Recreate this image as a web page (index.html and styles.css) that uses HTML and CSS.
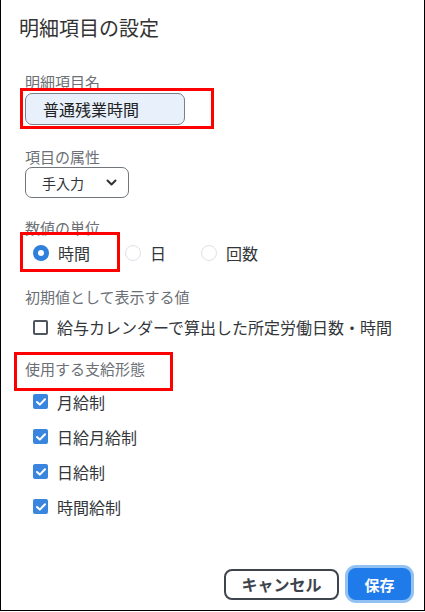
FILE: index.html
```html
<!DOCTYPE html>
<html lang="ja">
<head>
    <meta charset="UTF-8">
    <meta name="viewport" content="width=device-width, initial-scale=1.0">
    <title>明細項目の設定</title>
    <link rel="stylesheet" href="styles.css">
</head>
<body>
    <div class="dialog">
        <h1 class="title">明細項目の設定</h1>

        <div class="field field-name">
            <div class="label">明細項目名</div>
            <div class="text-input">普通残業時間</div>
        </div>

        <div class="field field-type">
            <div class="label">項目の属性</div>
            <div class="select">
                <span>手入力</span>
                <svg class="chevron" width="11" height="7" viewBox="0 0 11 7">
                    <path d="M1.5 1.5 L5.5 5.5 L9.5 1.5" fill="none" stroke="#2f3338" stroke-width="2" stroke-linecap="round" stroke-linejoin="round"/>
                </svg>
            </div>
        </div>

        <div class="field">
            <div class="label">数値の単位</div>
            <div class="radios">
                <label class="radio"><span class="dot checked"></span>時間</label>
                <label class="radio"><span class="dot"></span>日</label>
                <label class="radio"><span class="dot"></span>回数</label>
            </div>
        </div>

        <div class="field">
            <div class="label">初期値として表示する値</div>
            <div class="check-single">
                <label class="check"><span class="box"></span>給与カレンダーで算出した所定労働日数・時間</label>
            </div>
        </div>

        <div class="field field-pay">
            <div class="label">使用する支給形態</div>
            <div class="check-list">
                <label class="check"><span class="box on"><svg width="10" height="8" viewBox="0 0 10 8"><path d="M1 4 L3.8 6.6 L9 1.2" fill="none" stroke="#fff" stroke-width="2" stroke-linecap="round" stroke-linejoin="round"/></svg></span>月給制</label>
                <label class="check"><span class="box on"><svg width="10" height="8" viewBox="0 0 10 8"><path d="M1 4 L3.8 6.6 L9 1.2" fill="none" stroke="#fff" stroke-width="2" stroke-linecap="round" stroke-linejoin="round"/></svg></span>日給月給制</label>
                <label class="check"><span class="box on"><svg width="10" height="8" viewBox="0 0 10 8"><path d="M1 4 L3.8 6.6 L9 1.2" fill="none" stroke="#fff" stroke-width="2" stroke-linecap="round" stroke-linejoin="round"/></svg></span>日給制</label>
                <label class="check"><span class="box on"><svg width="10" height="8" viewBox="0 0 10 8"><path d="M1 4 L3.8 6.6 L9 1.2" fill="none" stroke="#fff" stroke-width="2" stroke-linecap="round" stroke-linejoin="round"/></svg></span>時間給制</label>
            </div>
        </div>

        <div class="footer">
            <button class="btn cancel">キャンセル</button>
            <button class="btn save">保存</button>
        </div>

        <!-- 赤枠の注釈 -->
        <div class="mark mark-1"></div>
        <div class="mark mark-2"></div>
        <div class="mark mark-3"></div>
    </div>
</body>
</html>
```

FILE: styles.css
```css
body{
    margin: 0;
    background-color: #fff;
    font-family: "Noto Sans CJK JP", sans-serif;
}
.dialog{
    position: relative;
    width: 425px;
    height: 611px;
    box-sizing: border-box;
    border: 1px solid #000;
    border-top: none;
    display: flex;
    flex-direction: column;
    padding-left: 24px;
    color: #33363a;
}
.title{
    margin: 0 0 0 -6px;
    height: 56px;
    line-height: 56px;
    font-size: 20px;
    font-weight: normal;
    color: #333;
}
.field{
    margin-top: 20px;
}
.field-name{
    margin-top: 16px;
}
.field-type{
    margin-top: 22px;
}
.field-pay{
    margin-top: 18px;
}
.label{
    height: 20px;
    line-height: 20px;
    font-size: 15px;
    color: #6c7076;
}
.text-input{
    margin-top: 1px;
    width: 160px;
    height: 32px;
    box-sizing: border-box;
    border: 1px solid #7b8088;
    border-radius: 7px;
    background-color: #e8f0fc;
    padding-left: 17px;
    line-height: 30px;
    font-size: 16px;
    color: #222;
}
.select{
    width: 104px;
    height: 31px;
    box-sizing: border-box;
    border: 1px solid #70757c;
    border-radius: 7px;
    display: flex;
    align-items: center;
    padding-left: 16px;
    font-size: 14px;
    color: #2f3338;
}
.chevron{
    margin-left: 22px;
}
.radios{
    margin-top: 1px;
    height: 28px;
    display: flex;
    align-items: center;
    gap: 35px;
    padding-left: 8px;
}
.radio{
    display: flex;
    align-items: center;
    gap: 9px;
    font-size: 16px;
    color: #33363a;
}
.dot{
    width: 16px;
    height: 16px;
    box-sizing: border-box;
    border-radius: 50%;
    border: 1.5px solid #dde2e9;
}
.dot.checked{
    border: 5px solid #2f80dc;
    background-color: #fff;
}
.check-single{
    margin-top: 6px;
}
.check-list{
    margin-top: 5px;
}
.check{
    height: 35px;
    display: flex;
    align-items: center;
    gap: 9px;
    padding-left: 8px;
    font-size: 16px;
    color: #33363a;
}
.check-single .check{
    height: 28px;
}
.box{
    width: 15px;
    height: 15px;
    box-sizing: border-box;
    border: 2px solid #50565e;
    border-radius: 2px;
    display: flex;
    align-items: center;
    justify-content: center;
}
.box.on{
    border: none;
    background-color: #3a86df;
}
.footer{
    margin-top: auto;
    display: flex;
    justify-content: flex-end;
    align-items: center;
    gap: 9px;
    padding: 0 13px 10px 0;
}
.btn{
    height: 32px;
    border-radius: 8px;
    font-family: "Noto Sans CJK JP", sans-serif;
    font-weight: bold;
    cursor: pointer;
}
.cancel{
    width: 115px;
    height: 31px;
    border: 2px solid #3e444c;
    background-color: #fff;
    color: #3e444c;
    font-size: 16px;
}
.save{
    width: 63px;
    border: none;
    background-color: #1f7be9;
    box-shadow: 0 0 0 3px #92c2f1;
    color: #fff;
    font-size: 15px;
}
.mark{
    position: absolute;
    box-sizing: border-box;
    border: 3px solid #f00;
}
.mark-1{
    left: 19px;
    top: 88px;
    width: 194px;
    height: 41px;
}
.mark-2{
    left: 19px;
    top: 232px;
    width: 100px;
    height: 40px;
}
.mark-3{
    left: 13px;
    top: 352px;
    width: 159px;
    height: 39px;
}
```
